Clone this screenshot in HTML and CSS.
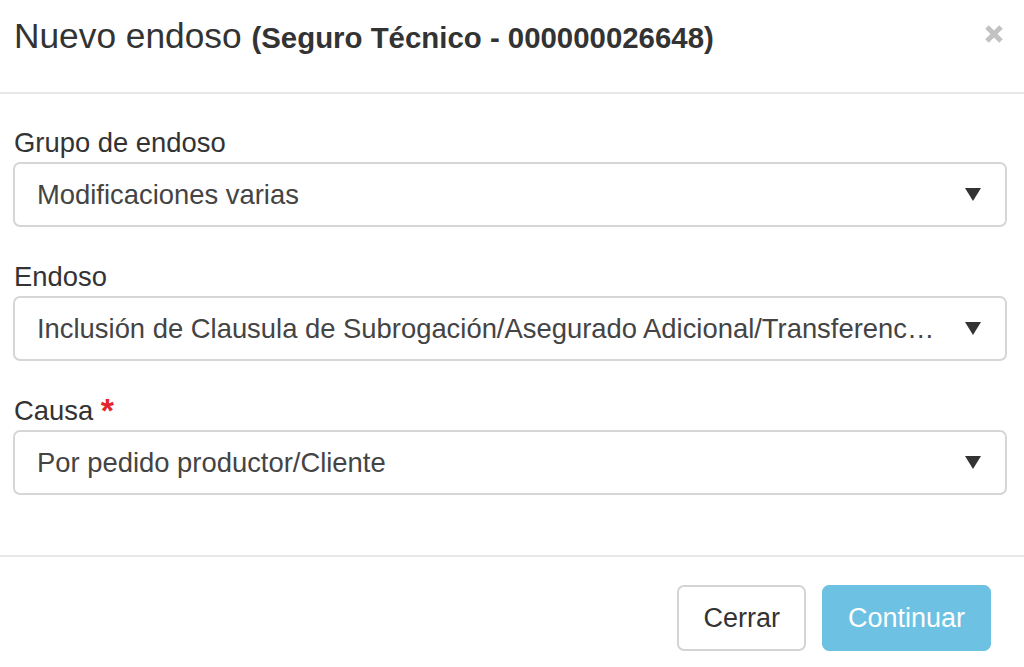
FILE: index.html
```html
<!DOCTYPE html>
<html lang="es">
<head>
<meta charset="utf-8">
<title>Nuevo endoso</title>
<link rel="stylesheet" href="styles.css">
</head>
<body>
<div class="modal">
  <div class="modal-header">
    <h4 class="modal-title">Nuevo endoso <span class="subtitle">(Seguro Técnico - 000000026648)</span></h4>
    <button class="close" type="button" aria-label="Cerrar">
      <svg width="18" height="18" viewBox="0 0 18 18"><path d="M2 2 L16 16 M16 2 L2 16" stroke="#c2c2c2" stroke-width="5" stroke-linecap="butt"/></svg>
    </button>
  </div>
  <div class="modal-body">
    <div class="form-group">
      <label class="label">Grupo de endoso</label>
      <div class="select">
        <span class="select-text">Modificaciones varias</span>
        <span class="caret"></span>
      </div>
    </div>
    <div class="form-group">
      <label class="label">Endoso</label>
      <div class="select" title="Inclusión de Clausula de Subrogación/Asegurado Adicional/Transferencia de Derechos">
        <span class="select-text">Inclusión de Clausula de Subrogación/Asegurado Adicional/Transferenc…</span>
        <span class="caret"></span>
      </div>
    </div>
    <div class="form-group">
      <label class="label">Causa <span class="required">*</span></label>
      <div class="select">
        <span class="select-text">Por pedido productor/Cliente</span>
        <span class="caret"></span>
      </div>
    </div>
  </div>
  <div class="modal-footer">
    <button class="btn btn-default" type="button">Cerrar</button>
    <button class="btn btn-info" type="button" disabled>Continuar</button>
  </div>
</div>
</body>
</html>
```
FILE: styles.css
```css
html, body {
  margin: 0;
  padding: 0;
  background: #fff;
}
body {
  font-family: "Liberation Sans", Arial, Helvetica, sans-serif;
  color: #333;
  width: 1024px;
  height: 667px;
  overflow: hidden;
}
.modal {
  display: flex;
  flex-direction: column;
}
.modal-header {
  display: flex;
  align-items: flex-start;
  justify-content: space-between;
  padding: 17px 21px 0 14px;
  height: 75px;
  border-bottom: 2px solid #e7e7e7;
}
.modal-title {
  margin: 0;
  font-size: 35.3px;
  line-height: 38px;
  font-weight: normal;
  color: #333;
}
.subtitle {
  font-size: 29.4px;
  font-weight: bold;
}
.close {
  margin: 8px 0 0 0;
  padding: 0;
  border: 0;
  background: none;
  width: 18px;
  height: 18px;
  display: block;
}
.close svg {
  display: block;
}
.modal-body {
  display: flex;
  flex-direction: column;
  gap: 34px;
  padding: 33px 17px 60px 13px;
}
.form-group {
  display: flex;
  flex-direction: column;
}
.label {
  font-size: 27.4px;
  line-height: 32px;
  margin: 0 0 3px 1px;
  color: #333;
}
.required {
  color: #e3262b;
  font-weight: bold;
  font-size: 34px;
  line-height: 0;
  position: relative;
  top: 2px;
}
.select {
  height: 65px;
  box-sizing: border-box;
  border: 2px solid #d6d6d6;
  border-radius: 7px;
  display: flex;
  align-items: center;
  padding: 0 24px 0 22px;
  font-size: 27.4px;
  color: #444;
}
.select-text {
  flex: 1;
  min-width: 0;
  white-space: nowrap;
  margin-right: 20px;
}
.caret {
  width: 0;
  height: 0;
  border-left: 8px solid transparent;
  border-right: 8px solid transparent;
  border-top: 13px solid #333;
  flex: none;
}
.modal-footer {
  border-top: 2px solid #e7e7e7;
  padding: 28px 33px 0 0;
  display: flex;
  justify-content: flex-end;
  gap: 16px;
}
.btn {
  font-family: "Liberation Sans", Arial, Helvetica, sans-serif;
  font-size: 27px;
  height: 66px;
  padding: 0 25px;
  border-radius: 7px;
  border: 1px solid #ccc;
  background: #fff;
  color: #333;
}
.btn-default {
  border: 2px solid #d4d4d4;
  padding: 0 24px;
}
.btn-info {
  background: #6dc1e3;
  border-color: #6dc1e3;
  color: #fff;
}
```
